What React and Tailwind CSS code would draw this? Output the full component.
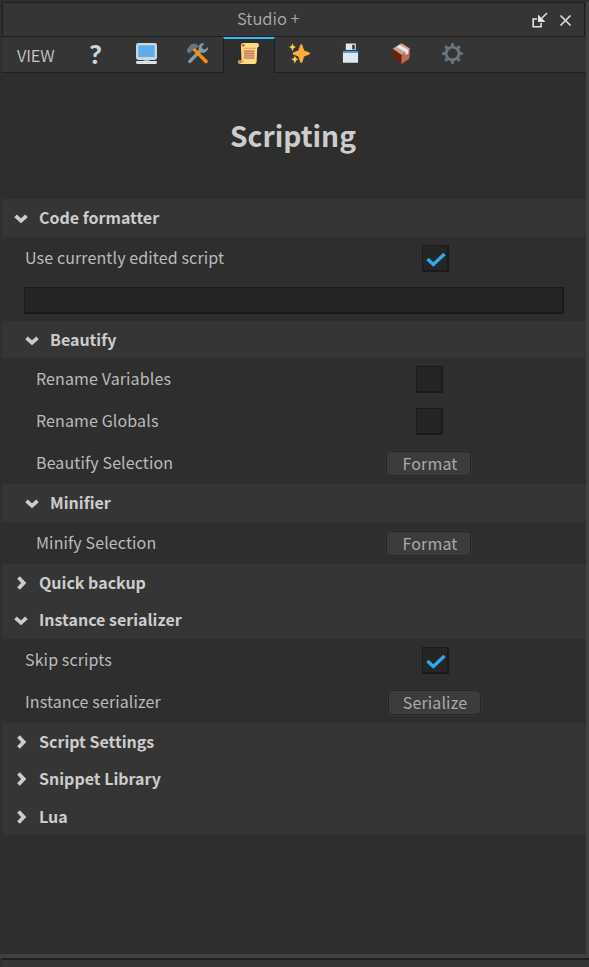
import React, { useState } from 'react';
import clsx from 'clsx';

const MonitorIcon = () => (
  <svg width="21" height="21" viewBox="0 0 36 36">
    <path fill="#ccd6dd" d="M36 25a4 4 0 0 1-4 4H4a4 4 0 0 1-4-4V4a4 4 0 0 1 4-4h28a4 4 0 0 1 4 4z" />
    <path fill="#5dadec" d="M4 4h28v20H4z" />
    <path fill="#9aaab4" d="M13 29h10v3H13z" />
    <rect y="31" width="36" height="5" rx="2.5" fill="#e1e8ed" />
    <path stroke="#b5c2ca" strokeWidth="1" strokeDasharray="2 1" d="M3 33.5h30" />
  </svg>
);

const ToolsIcon = () => (
  <svg width="21" height="21" viewBox="0 0 36 36">
    <path stroke="#8899a6" strokeWidth="6" strokeLinecap="round" d="M5 31.500 24 12" />
    <path
      fill="#8899a6"
      d="M28 0q-7 1-8 7-1 4 1 7 3 3 7 3 6-1 8-7V7l-5 4-5-1-1-4 4-4z"
    />
    <path fill="#66757f" d="M12 13 20 6 18 3Q12-2 5 4L2 9 0 10v5l4 3 4-4z" />
    <path fill="#f4900c" d="m9.500 12 4-3.500L35.500 30q1 5-4 5z" />
  </svg>
);

const ScrollIcon = () => (
  <svg width="21" height="21" viewBox="0 0 36 36" className="mr-px">
    <path fill="#ffd983" d="M5 4q0-4 4-4h23q4 0 4 4 0 3-3 4l-1 23q0 5-4 5H4q-4 0-4-4 0-3 4-3h2z" />
    <path fill="#e39f3d" d="M9 8h22v1.800H9zM7 28l3 3-1 3-3-4z" />
    <circle cx="9" cy="4" r="2.500" fill="#c1694f" />
    <circle cx="4" cy="32" r="2.300" fill="#c1694f" />
    <path fill="#e6aa78" d="M10 12h18v15H10z" />
    <path stroke="#c1694f" strokeWidth="1.400" d="M10 14h18M10 18h18M10 22h18M10 26h18" />
  </svg>
);

const SparklesIcon = () => (
  <svg width="21" height="21" viewBox="0 0 36 36">
    <path fill="#ffac33" d="M21 2q2 0 2 2l3 9 8 3q2 1 2 2t-2 2l-8 3-3 9q0 2-2 2t-2-2l-3-9-8-3q-2-1-2-2t2-2l8-3 3-9q0-2 2-2z" />
    <path fill="#ffd04d" d="m6 1 2 4 4 2-4 2-2 5-2-5-4-2 4-2zM10 22l2 4 4 2-4 2-2 5-2-5-4-2 4-2z" />
  </svg>
);

const FloppyIcon = () => (
  <svg width="21" height="21" viewBox="0 0 36 36">
    <path fill="#31373d" d="M4 4q0-3 3-3h20l5 5v25q0 3-3 3H7q-3 0-3-3z" />
    <path fill="#e1e8ed" d="M10 1h17v11H10zM5 17h26v17H5z" />
    <path fill="#292f33" d="M21 3h4v8h-4z" />
    <path fill="#55acee" d="M5 14h26v3H5z" />
  </svg>
);

const PackageIcon = () => (
  <svg width="21" height="21" viewBox="0 0 36 36">
    <path fill="#662113" d="m3 11 15 9v16L5 27q-2-2-2-4z" />
    <path fill="#c1694f" d="m18 20 14-10v14q0 2-2 4L18 36z" />
    <path fill="#d99e82" d="M3 10 17 1h2l14 9-15 10z" />
    <path fill="#e1e8ed" d="m9 7 6-4 15 9v6l-5 3v-5z" />
    <path fill="#99aab5" d="m9 7 15 10 1 4-14-10z" opacity=".55" />
  </svg>
);

const GEAR_TEETH = [0, 45, 90, 135, 180, 225, 270, 315];

const GearIcon = () => (
  <svg width="21" height="21" viewBox="0 0 36 36">
    <circle cx="18" cy="18" r="11" fill="none" stroke="#66757f" strokeWidth="5" />
    {GEAR_TEETH.map((angle) => (
      <path key={angle} fill="#66757f" d="m15 6 .8-5q.2-1 1.200-1h2q1 0 1.200 1l.8 5z" transform={`rotate(${angle} 18 18)`} />
    ))}
  </svg>
);

const HelpIcon = () => (
  <span className="font-['Lato'] text-[27px] leading-[21px] font-black text-[#ccd6dd]">?</span>
);

const tabs = [
  { id: 'help', Icon: HelpIcon },
  { id: 'view', Icon: MonitorIcon },
  { id: 'tools', Icon: ToolsIcon },
  { id: 'scripting', Icon: ScrollIcon },
  { id: 'effects', Icon: SparklesIcon },
  { id: 'save', Icon: FloppyIcon },
  { id: 'package', Icon: PackageIcon },
  { id: 'settings', Icon: GearIcon },
];

const TitleBar = () => (
  <div className="flex h-[35px] w-[583px] shrink-0 items-center border border-[#1f1f1f] bg-[#353535]">
    <span className="mb-[3px] ml-[234px] text-[16.5px] leading-[20px] font-[350] text-[#aaaaaa]">Studio +</span>
    <div className="mt-[2px] mr-[12px] ml-auto flex items-center gap-[11px]">
      <svg width="17" height="17" viewBox="0 0 17 17" fill="none" stroke="#e4e4e4">
        <path strokeWidth="1.6" d="M6 7H2.2v7.8H10V11" />
        <path strokeWidth="1.4" d="m16 1-6 6" />
        <path fill="#e4e4e4" stroke="none" d="M7 2.5V10h7.500z" />
      </svg>
      <svg width="13" height="13" viewBox="0 0 13 13" stroke="#dedede" strokeWidth="1.7">
        <path d="m1.500 1.500 10 10M11.500 1.500l-10 10" />
      </svg>
    </div>
  </div>
);

const TabBar = ({ active, onChange }) => (
  <div className="flex h-[36px] w-[584px] shrink-0 bg-[#353535]">
    <div className="flex w-[68px] items-center border-b border-[#1f1f1f] pl-[15px] text-[16.5px] leading-[20px] font-[350] tracking-[-0.2px] text-[#c8c8c8]">
      VIEW
    </div>
    {tabs.map(({ id, Icon }) => (
      <button
        key={id}
        onClick={() => onChange(id)}
        className={clsx(
          'flex w-[51px] items-center justify-center',
          id === active
            ? '-mr-px w-[52px] border-x border-t-2 border-x-[#1f1f1f] border-t-[#35b5ff] bg-[#2e2e2e] pb-[5px]'
            : 'border-b border-[#1f1f1f] pb-[2px]'
        )}
      >
        <Icon />
      </button>
    ))}
    <div className="flex-1 border-b border-[#1f1f1f]" />
  </div>
);

const Header = ({ label, open, nested, tall }) => (
  <div className={clsx('flex items-center bg-[#353535]', tall ? 'h-[38px]' : 'h-[37px]', nested ? 'pl-[22px]' : 'pl-[11px]')}>
    <svg width="16" height="16" viewBox="0 0 16 16" fill="none" stroke="#cccccc" strokeWidth="3.8">
      <path d={open ? 'M2.500 5.800 8 10.800l5.500-5' : 'm5.500 2.500 5.200 5.500-5.200 5.500'} />
    </svg>
    <span className="mb-[2px] ml-[10px] text-[16px] leading-[20px] font-bold text-[#cccccc]">{label}</span>
  </div>
);

const Row = ({ label, nested, children }) => (
  <div className="flex h-[42px] items-center">
    <span
      className={clsx(
        'mb-[2px] w-[384px] shrink-0 text-[16px] leading-[20px] tracking-[0.12px] text-[#bbbbbb]',
        nested ? 'pl-[34px]' : 'pl-[23px]'
      )}
    >
      {label}
    </span>
    {children}
  </div>
);

const Checkbox = ({ defaultChecked = false, nested }) => {
  const [checked, setChecked] = useState(defaultChecked);

  return (
    <button
      onClick={() => setChecked(!checked)}
      className={clsx(
        'mt-px size-[27px] border-t border-r-2 border-b-2 border-l border-[#1a1a1a] bg-[#252525]',
        nested ? 'ml-[30px]' : 'ml-[36px]'
      )}
    >
      {checked && (
        <svg width="24" height="24" viewBox="0 0 24 24" fill="none" stroke="#30a8f0" strokeWidth="3.4">
          <path d="m4.500 13 5.800 5.500L21.500 8" />
        </svg>
      )}
    </button>
  );
};

const Button = ({ children, wide }) => (
  <button
    className={clsx(
      'mt-px flex h-[25px] justify-center rounded-[4px] border border-[#252525] bg-[#3c3c3c] text-[16px] leading-[22px] tracking-[0.13px] text-[#aaaaaa] shadow-[0_0_0_1px_#353535]',
      wide ? 'ml-[2px] w-[93px] pl-px' : 'w-[85px] pl-[3px]'
    )}
  >
    {children}
  </button>
);

export default function App() {
  const [tab, setTab] = useState('scripting');

  return (
    <div className="flex h-[967px] w-[589px] flex-col bg-[#2e2e2e] pt-[2px] font-['Noto_Sans_CJK_SC',sans-serif]">
      <div className="flex h-[952px]">
        <div className="flex w-[586px] flex-col pl-[2px]">
          <TitleBar />
          <TabBar active={tab} onChange={setTab} />

          <h1 className="flex h-[126px] items-center justify-center pr-[2px] pb-[2px] text-[28.2px] font-bold text-[#cccccc]">
            Scripting
          </h1>

          <Header label="Code formatter" open tall />
          <Row label="Use currently edited script">
            <Checkbox defaultChecked />
          </Row>
          <div className="h-[42px] pt-[8px] pl-[22px]">
            <input className="block h-[27px] w-[540px] border-t border-r-2 border-b-2 border-l border-[#1a1a1a] bg-[#252525] px-2 text-[#cccccc]" />
          </div>
          <Header label="Beautify" open nested />
          <Row label="Rename Variables" nested>
            <Checkbox nested />
          </Row>
          <Row label="Rename Globals" nested>
            <Checkbox nested />
          </Row>
          <Row label="Beautify Selection" nested>
            <Button>Format</Button>
          </Row>
          <Header label="Minifier" open nested tall />
          <Row label="Minify Selection" nested>
            <Button>Format</Button>
          </Row>
          <Header label="Quick backup" />
          <Header label="Instance serializer" open tall />
          <Row label="Skip scripts">
            <Checkbox defaultChecked />
          </Row>
          <Row label="Instance serializer">
            <Button wide>Serialize</Button>
          </Row>
          <Header label="Script Settings" />
          <Header label="Snippet Library" tall />
          <Header label="Lua" />
        </div>
        <div className="flex-1 bg-[#404040]" />
      </div>
      <div className="h-[4px] bg-[#404040]" />
      <div className="ml-[2px] flex-1 border-t-2 border-[#202020] bg-[#353535]" />
    </div>
  );
}
